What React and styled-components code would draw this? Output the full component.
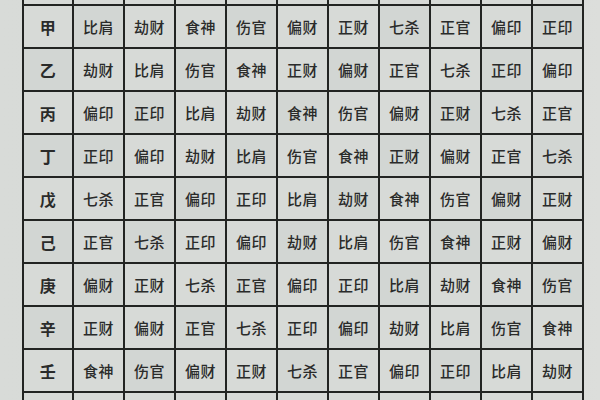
import React from 'react';
import styled, { createGlobalStyle } from 'styled-components';

const rows = [
  ['甲', ['比肩', '劫财', '食神', '伤官', '偏财', '正财', '七杀', '正官', '偏印', '正印']],
  ['乙', ['劫财', '比肩', '伤官', '食神', '正财', '偏财', '正官', '七杀', '正印', '偏印']],
  ['丙', ['偏印', '正印', '比肩', '劫财', '食神', '伤官', '偏财', '正财', '七杀', '正官']],
  ['丁', ['正印', '偏印', '劫财', '比肩', '伤官', '食神', '正财', '偏财', '正官', '七杀']],
  ['戊', ['七杀', '正官', '偏印', '正印', '比肩', '劫财', '食神', '伤官', '偏财', '正财']],
  ['己', ['正官', '七杀', '正印', '偏印', '劫财', '比肩', '伤官', '食神', '正财', '偏财']],
  ['庚', ['偏财', '正财', '七杀', '正官', '偏印', '正印', '比肩', '劫财', '食神', '伤官']],
  ['辛', ['正财', '偏财', '正官', '七杀', '正印', '偏印', '劫财', '比肩', '伤官', '食神']],
  ['壬', ['食神', '伤官', '偏财', '正财', '七杀', '正官', '偏印', '正印', '比肩', '劫财']],
];

const blank = Array.from({ length: 11 });

const GlobalStyle = createGlobalStyle`
  html, body {
    margin: 0;
    padding: 0;
    width: 600px;
    height: 400px;
    overflow: hidden;
    background: #d9dcd9;
  }
`;

const Page = styled.div`
  width: 600px;
  height: 400px;
  overflow: hidden;
  padding-left: 22px;
  box-sizing: border-box;
  background: linear-gradient(90deg, #d8dbd8 0%, #d6d9d6 60%, #dcdedb 100%);
`;

const Grid = styled.div`
  margin-top: -37px;
  display: grid;
  grid-template-columns: 48px repeat(10, 49px);
  grid-auto-rows: 41px;
  gap: 2px;
  padding: 0 2px 2px 2px;
  width: max-content;
  background: #222422;
`;

const Cell = styled.div`
  display: flex;
  align-items: center;
  justify-content: center;
  background: ${(p) => (p.$shade ? '#d2d6d3' : '#d7dad7')};
  color: #2a2b2a;
  font-family: 'Noto Sans CJK SC', 'Noto Sans', sans-serif;
  font-size: ${(p) => (p.$stem ? '16px' : '15px')};
  font-weight: ${(p) => (p.$stem ? 700 : 500)};
  letter-spacing: 0.5px;
`;

export default function App() {
  return (
    <Page>
      <GlobalStyle />
      <Grid>
        {/* header row, cropped off at the top of the photo */}
        {blank.map((_, i) => (
          <Cell key={'h' + i} />
        ))}
        {rows.map(([stem, gods], r) => (
          <React.Fragment key={stem}>
            <Cell $stem $shade={r % 2 === 1}>
              {stem}
            </Cell>
            {gods.map((g, c) => (
              <Cell key={c} $shade={(r + c) % 3 === 0}>
                {g}
              </Cell>
            ))}
          </React.Fragment>
        ))}
        {/* 癸 row, cropped off at the bottom */}
        {blank.map((_, i) => (
          <Cell key={'f' + i} />
        ))}
      </Grid>
    </Page>
  );
}
